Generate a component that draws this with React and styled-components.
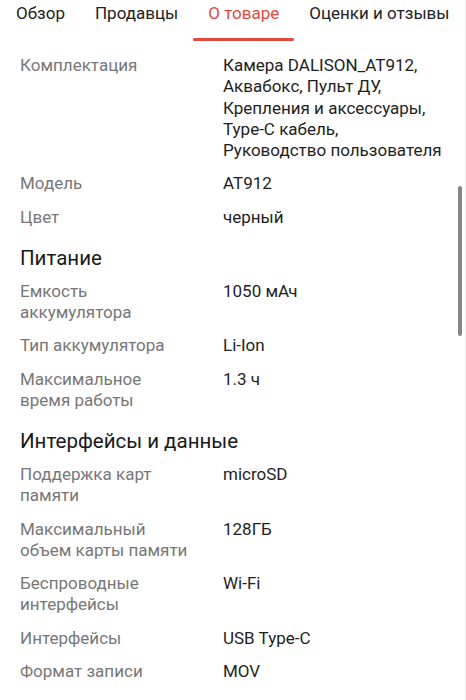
import React from "react";
import styled, { createGlobalStyle } from "styled-components";

const GlobalStyle = createGlobalStyle`
    body {
        margin: 0;
        background: #fff;
        font-family: Roboto, "Noto Sans", "Liberation Sans", sans-serif;
    }
`;

const Screen = styled.div`
    position: relative;
    width: 466px;
    height: 700px;
    overflow: hidden;
    background: #fff;
    border-right: 1px solid #ececec;
    box-sizing: border-box;
`;

const TabBar = styled.div`
    display: flex;
    height: 41px;
    padding: 1px 0 0 1px;
    box-sizing: border-box;
`;

const Tab = styled.div`
    padding: 0 15px;
    font-size: 17px;
    line-height: 24px;
    color: ${(p) => (p.active ? "#e04a3f" : "#222")};
    white-space: nowrap;
    position: relative;
    &::after {
        content: "";
        display: ${(p) => (p.active ? "block" : "none")};
        position: absolute;
        left: 0;
        right: 0;
        top: 37px;
        height: 3px;
        border-radius: 2px;
        background: #e04a3f;
    }
`;

const List = styled.div`
    padding: 8px 0 0 20px;
`;

const Row = styled.div`
    display: grid;
    grid-template-columns: 170px 1fr;
    column-gap: 33px;
    padding: 6px 0;
    font-size: 17px;
    line-height: 21.25px;
`;

const Label = styled.div`
    color: #777;
`;

const Value = styled.div`
    color: #1e1e1e;
`;

const Heading = styled.div`
    padding: 11px 0 4px;
    font-size: 20.5px;
    line-height: 26px;
    color: #1a1a1a;
`;

const Scrollbar = styled.div`
    position: absolute;
    right: 3px;
    top: 186px;
    width: 4px;
    height: 150px;
    border-radius: 2px;
    background: #868686;
`;

const tabs = ["Обзор", "Продавцы", "О товаре", "Оценки и отзывы"];

const sections = [
    {
        rows: [
            [
                "Комплектация",
                [
                    "Камера DALISON_AT912,",
                    "Аквабокс, Пульт ДУ,",
                    "Крепления и аксессуары,",
                    "Type-C кабель,",
                    "Руководство пользователя",
                ],
            ],
            ["Модель", ["AT912"]],
            ["Цвет", ["черный"]],
        ],
    },
    {
        title: "Питание",
        rows: [
            ["Емкость аккумулятора", ["1050 мАч"]],
            ["Тип аккумулятора", ["Li-Ion"]],
            ["Максимальное время работы", ["1.3 ч"]],
        ],
    },
    {
        title: "Интерфейсы и данные",
        rows: [
            ["Поддержка карт памяти", ["microSD"]],
            ["Максимальный объем карты памяти", ["128ГБ"]],
            ["Беспроводные интерфейсы", ["Wi-Fi"]],
            ["Интерфейсы", ["USB Type-C"]],
            ["Формат записи", ["MOV"]],
        ],
    },
    {
        title: "Питание камеры",
        rows: [],
    },
];

const App = () => {
    return (
        <Screen>
            <GlobalStyle />
            <TabBar>
                {tabs.map((t) => (
                    <Tab key={t} active={t === "О товаре"}>
                        {t}
                    </Tab>
                ))}
            </TabBar>
            <List>
                {sections.map((s, i) => (
                    <React.Fragment key={i}>
                        {s.title && <Heading>{s.title}</Heading>}
                        {s.rows.map(([label, lines]) => (
                            <Row key={label}>
                                <Label>{label}</Label>
                                <Value>
                                    {lines.map((l) => (
                                        <div key={l}>{l}</div>
                                    ))}
                                </Value>
                            </Row>
                        ))}
                    </React.Fragment>
                ))}
            </List>
            <Scrollbar />
        </Screen>
    );
};

export default App;
